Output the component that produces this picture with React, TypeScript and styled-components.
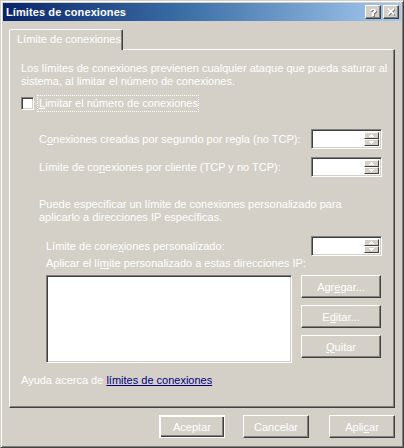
import React from "react";
import styled, { createGlobalStyle } from "styled-components";

const Global = createGlobalStyle`
  html, body { margin: 0; padding: 0; background: #d4d0c8; }
  body { font-family: "Liberation Sans", Arial, sans-serif; font-size: 11px; }
  * { box-sizing: border-box; }
`;

const Face = "#d4d0c8";

const Window = styled.div`
  width: 404px;
  height: 448px;
  background: ${Face};
  border: 1px solid;
  border-color: ${Face} #404040 #404040 ${Face};
  box-shadow: inset 1px 1px #ffffff, inset -1px -1px #808080;
  padding: 2px;
  display: flex;
  flex-direction: column;
  color: #ffffff;
  white-space: nowrap;
`;

const TitleBar = styled.div`
  height: 18px;
  background: linear-gradient(to right, #0a246a 0%, #3a6ea5 45%, #a6caf0 100%);
  display: flex;
  align-items: center;
  padding: 0 2px 0 3px;
`;

const TitleText = styled.div`
  flex: 1;
  font-weight: bold;
  font-size: 11px;
  color: #ffffff;
  letter-spacing: 0.1px;
`;

const CaptionBtn = styled.div<{ $gap?: boolean }>`
  width: 16px;
  height: 14px;
  background: ${Face};
  border: 1px solid;
  border-color: #ffffff #404040 #404040 #ffffff;
  box-shadow: inset -1px -1px #808080;
  margin-left: ${(p) => (p.$gap ? "2px" : "0")};
  display: flex;
  align-items: center;
  justify-content: center;
`;

const Body = styled.div`
  flex: 1;
  display: flex;
  flex-direction: column;
  padding: 8px 6px 0 6px;
`;

const TabStrip = styled.div`
  display: flex;
  height: 20px;
  position: relative;
  z-index: 1;
`;

const Tab = styled.div`
  width: 114px;
  height: 21px;
  border: 1px solid;
  border-bottom: none;
  border-color: #ffffff #404040 transparent #ffffff;
  border-radius: 2px 2px 0 0;
  box-shadow: inset -1px 0 #808080;
  background: ${Face};
  padding: 3px 0 0 7px;
  font-size: 11px;
`;

const Panel = styled.div`
  width: 386px;
  height: 359px;
  border: 1px solid;
  border-color: #ffffff #404040 #404040 #ffffff;
  box-shadow: inset -1px -1px #808080;
  padding: 12px 12px 0 11px;
  display: flex;
  flex-direction: column;
`;

const Para = styled.div<{ $indent?: number; $mt?: number }>`
  line-height: 13px;
  margin-left: ${(p) => p.$indent ?? 0}px;
  margin-top: ${(p) => p.$mt ?? 0}px;
`;

const CheckRow = styled.div`
  display: flex;
  align-items: center;
  height: 17px;
  margin-top: 7px;
`;

const CheckBox = styled.div`
  width: 13px;
  height: 13px;
  background: #ffffff;
  border: 1px solid;
  border-color: #808080 #ffffff #ffffff #808080;
  box-shadow: inset 1px 1px #404040, inset -1px -1px ${Face};
`;

const FocusLabel = styled.div`
  margin-left: 3px;
  padding: 1px 1px 1px 2px;
  outline: 1px dotted #ffffff;
  outline-offset: -1px;
  height: 17px;
  line-height: 15px;
`;

const FieldRow = styled.div<{ $indent: number; $mt: number }>`
  display: flex;
  align-items: center;
  justify-content: space-between;
  padding-left: ${(p) => p.$indent}px;
  margin-top: ${(p) => p.$mt}px;
  height: 20px;
`;

const Spin = styled.div`
  width: 71px;
  height: 20px;
  background: #ffffff;
  border: 1px solid;
  border-color: #808080 #ffffff #ffffff #808080;
  box-shadow: inset 1px 1px #404040, inset -1px -1px ${Face};
  padding: 2px 2px 2px 2px;
  display: flex;
  justify-content: flex-end;
`;

const SpinBtns = styled.div`
  width: 15px;
  display: flex;
  flex-direction: column;
`;

const SpinBtn = styled.div`
  flex: 1;
  background: ${Face};
  border: 1px solid;
  border-color: #ffffff #404040 #404040 #ffffff;
  display: flex;
  align-items: center;
  justify-content: center;
`;

const U = styled.span`
  text-decoration: underline;
`;

const ListRow = styled.div`
  display: flex;
  margin-top: 5px;
  padding-left: 25px;
  gap: 9px;
`;

const ListBox = styled.div`
  width: 246px;
  height: 88px;
  background: #ffffff;
  border: 1px solid;
  border-color: #808080 #ffffff #ffffff #808080;
  box-shadow: inset 1px 1px #404040, inset -1px -1px ${Face};
`;

const SideButtons = styled.div`
  display: flex;
  flex-direction: column;
  gap: 7px;
`;

const Button = styled.div<{ $w: number; $default?: boolean; $ml?: number }>`
  width: ${(p) => p.$w}px;
  height: 23px;
  margin-left: ${(p) => p.$ml ?? 0}px;
  background: ${Face};
  border: 1px solid;
  border-color: #ffffff #404040 #404040 #ffffff;
  box-shadow: inset -1px -1px #808080;
  display: flex;
  align-items: center;
  justify-content: center;
  color: #ffffff;
  font-size: 11px;
  ${(p) =>
    p.$default
      ? `border-color: #ffffff #ffffff #ffffff #ffffff;
         box-shadow: inset 1px 1px #ffffff, inset -1px -1px #404040, inset -2px -2px #808080;`
      : ""}
`;

const Help = styled.div`
  margin-top: 11px;
  line-height: 13px;
`;

const Link = styled.span`
  color: #000080;
  text-decoration: underline;
`;

const Footer = styled.div`
  display: flex;
  justify-content: flex-end;
  padding: 7px 0 0 0;
  gap: 18px;
`;

const SpinBox = () => (
  <Spin>
    <SpinBtns>
      <SpinBtn>
        <svg width="5" height="3" viewBox="0 0 5 3">
          <path d="M2 0h1v1h1v1h1v1H0V2h1V1h1z" fill="#ffffff" />
        </svg>
      </SpinBtn>
      <SpinBtn>
        <svg width="5" height="3" viewBox="0 0 5 3">
          <path d="M0 0h5v1H4v1H3v1H2V2H1V1H0z" fill="#ffffff" />
        </svg>
      </SpinBtn>
    </SpinBtns>
  </Spin>
);

export default function App() {
  return (
    <>
      <Global />
      <Window>
        <TitleBar>
          <TitleText>Límites de conexiones</TitleText>
          <CaptionBtn>
            <svg width="8" height="9" viewBox="0 0 8 9">
              <path d="M2 1h4v1h1v2H6v1H5v1H3V4h1V3h1V2H3v1H1V2h1z" fill="#808080" transform="translate(1,1)" />
              <path d="M3 7h2v2H3z" fill="#808080" transform="translate(1,0)" />
              <path d="M2 1h4v1h1v2H6v1H5v1H3V4h1V3h1V2H3v1H1V2h1z" fill="#ffffff" />
              <path d="M3 7h2v2H3z" fill="#ffffff" transform="translate(0,-1)" />
            </svg>
          </CaptionBtn>
          <CaptionBtn $gap>
            <svg width="9" height="8" viewBox="0 0 9 8">
              <path d="M1 1l6 6M7 1l-6 6" stroke="#808080" strokeWidth="1.6" transform="translate(1,0.5)" />
              <path d="M1 0.5l6 6M7 0.5l-6 6" stroke="#ffffff" strokeWidth="1.6" />
            </svg>
          </CaptionBtn>
        </TitleBar>
        <Body>
          <TabStrip>
            <Tab>Límite de conexiones</Tab>
          </TabStrip>
          <Panel>
            <Para>
              Los límites de conexiones previenen cualquier ataque que pueda saturar al
              <br />
              sistema, al limitar el número de conexiones.
            </Para>
            <CheckRow>
              <CheckBox />
              <FocusLabel>
                <U>L</U>imitar el número de conexiones
              </FocusLabel>
            </CheckRow>
            <FieldRow $indent={18} $mt={17}>
              <span>
                C<U>o</U>nexiones creadas por segundo por regla (no TCP):
              </span>
              <SpinBox />
            </FieldRow>
            <FieldRow $indent={18} $mt={8}>
              <span>
                Límite de co<U>n</U>exiones por cliente (TCP y no TCP):
              </span>
              <SpinBox />
            </FieldRow>
            <Para $indent={18} $mt={21}>
              Puede especificar un límite de conexiones personalizado para
              <br />
              aplicarlo a direcciones IP específicas.
            </Para>
            <FieldRow $indent={25} $mt={12}>
              <span>
                Límite de cone<U>x</U>iones personalizado:
              </span>
              <SpinBox />
            </FieldRow>
            <Para $indent={25} $mt={1}>
              Aplicar el lí<U>m</U>ite personalizado a estas direcciones IP:
            </Para>
            <ListRow>
              <ListBox />
              <SideButtons>
                <Button $w={80}>
                  <span>
                    Agr<U>e</U>gar...
                  </span>
                </Button>
                <Button $w={80}>
                  <span>
                    E<U>d</U>itar...
                  </span>
                </Button>
                <Button $w={80}>
                  <span>
                    <U>Q</U>uitar
                  </span>
                </Button>
              </SideButtons>
            </ListRow>
            <Help>
              Ayuda acerca de <Link>límites de conexiones</Link>
            </Help>
          </Panel>
          <Footer>
            <Button $w={66} $default>
              Aceptar
            </Button>
            <Button $w={66}>Cancelar</Button>
            <Button $w={66} $ml={2}>
              <span>
                Apli<U>c</U>ar
              </span>
            </Button>
          </Footer>
        </Body>
      </Window>
    </>
  );
}
